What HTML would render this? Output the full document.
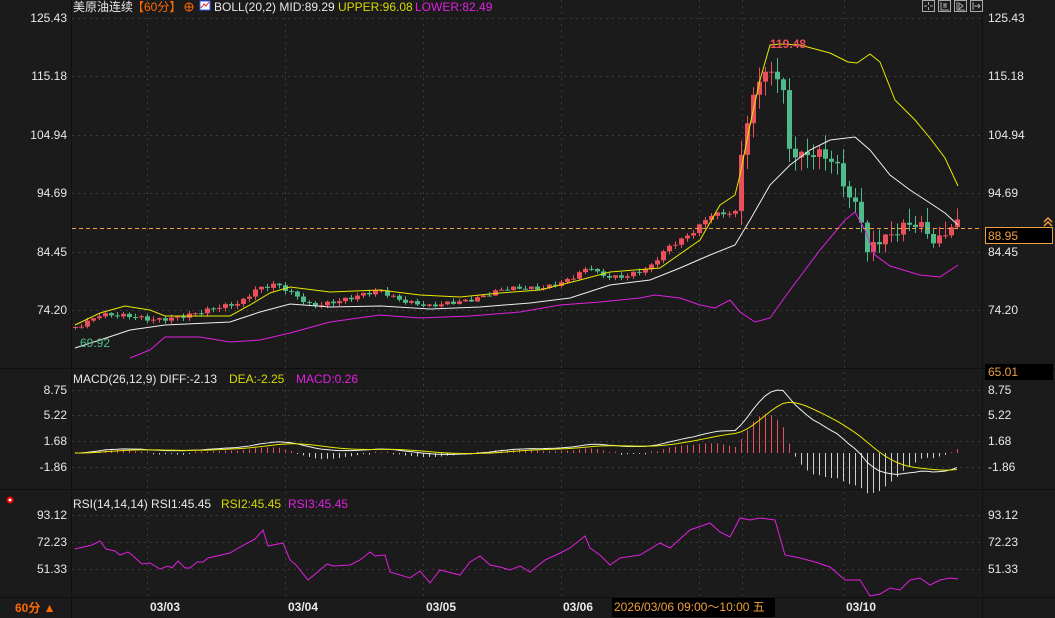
<!DOCTYPE html>
<html><head><meta charset="utf-8"><style>
html,body{margin:0;padding:0;background:#1b1b1b;width:1055px;height:618px;overflow:hidden;font-family:"Liberation Sans","Noto Sans CJK SC",sans-serif}
svg{position:absolute;left:0;top:0}
</style></head><body>
<svg id="s" width="1055" height="618" xmlns="http://www.w3.org/2000/svg" font-family="Liberation Sans, Noto Sans CJK SC, sans-serif">
<rect width="1055" height="618" fill="#1b1b1b"/>
<g stroke="#101010" stroke-width="1">
<line x1="71.5" y1="0" x2="71.5" y2="618"/>
<line x1="982.5" y1="0" x2="982.5" y2="618"/>
<line x1="0" y1="368.5" x2="1055" y2="368.5"/>
<line x1="0" y1="489.5" x2="1055" y2="489.5"/>
<line x1="0" y1="597.5" x2="1055" y2="597.5"/>
</g>
<g stroke="#3a3a3a" stroke-width="1" stroke-dasharray="2,4">
<line x1="72" y1="18.5" x2="982" y2="18.5"/><line x1="72" y1="76.5" x2="982" y2="76.5"/><line x1="72" y1="135.5" x2="982" y2="135.5"/><line x1="72" y1="193.5" x2="982" y2="193.5"/><line x1="72" y1="252.5" x2="982" y2="252.5"/><line x1="72" y1="310.5" x2="982" y2="310.5"/>
<line x1="72" y1="390.5" x2="982" y2="390.5"/><line x1="72" y1="415.5" x2="982" y2="415.5"/><line x1="72" y1="441.5" x2="982" y2="441.5"/><line x1="72" y1="467.5" x2="982" y2="467.5"/>
<line x1="72" y1="515.5" x2="982" y2="515.5"/><line x1="72" y1="542.5" x2="982" y2="542.5"/><line x1="72" y1="569.5" x2="982" y2="569.5"/>
<line x1="147.5" y1="0" x2="147.5" y2="597"/><line x1="285.5" y1="0" x2="285.5" y2="597"/><line x1="423.5" y1="0" x2="423.5" y2="597"/><line x1="561.5" y1="0" x2="561.5" y2="597"/><line x1="699.5" y1="0" x2="699.5" y2="597"/><line x1="742.5" y1="0" x2="742.5" y2="597"/><line x1="844.5" y1="0" x2="844.5" y2="597"/>
</g>
<g id="candles"></g>
<polyline fill="none" stroke="#e8e800" stroke-width="1" points="75,325 100,313 125,306 150,310 165,316 230,316 250,305 270,293 290,287 330,292 380,290 420,295 460,297 500,293 540,290 580,280 610,272 660,268 700,240 720,205 735,195 740,175 750,125 760,80 770,45 780,44 800,45 830,53 848,62 857,63 870,54 880,62 895,100 905,110 915,120 930,138 945,158 958,186"/>
<polyline fill="none" stroke="#f0f0f0" stroke-width="1" points="75,348 100,340 130,330 165,325 230,322 260,312 290,304 330,307 380,306 430,309 480,307 530,303 570,298 610,285 650,280 680,268 710,255 735,245 750,220 770,185 790,165 810,150 830,140 855,137 870,150 890,175 910,190 930,203 945,213 958,225"/>
<polyline fill="none" stroke="#e020e0" stroke-width="1" points="130,358 150,350 165,337 200,337 230,342 260,340 290,333 330,322 380,315 420,318 470,316 520,312 560,305 600,302 640,298 655,295 680,298 700,305 715,308 730,300 740,312 755,322 770,318 790,290 820,250 845,220 855,212 865,230 875,255 890,266 920,275 940,277 958,265"/>
<line x1="72" y1="228.5" x2="982" y2="228.5" stroke="#f0a040" stroke-width="1" stroke-dasharray="4,3"/>
<text x="770" y="48" fill="#e9505a" font-size="12" font-weight="bold">119.48</text>
<text x="80" y="347" fill="#4fba8a" font-size="12">69.92</text>
<g id="macd"></g>
<polyline fill="none" stroke="#e020e0" stroke-width="1" points="75,549 92,545 100,541 106,549 115,551 120,555 128,552 132,555 142,564 150,563 160,569 168,566 172,568 178,561 185,568 190,568 197,562 203,562 208,558 230,553 240,547 255,539 263,530 268,546 283,543 290,560 296,565 308,580 320,570 327,564 333,566 350,565 360,560 370,552 375,556 385,555 390,572 410,578 420,571 430,583 440,570 460,575 470,562 480,556 490,565 500,567 510,570 520,566 530,572 545,560 560,553 570,548 585,536 590,548 600,555 610,565 620,558 640,555 660,543 670,548 690,530 710,523 720,532 730,537 740,518 750,520 760,518 775,520 785,555 800,558 815,562 830,567 845,580 860,580 870,596 880,594 890,588 900,590 910,580 920,578 930,585 940,580 950,578 958,579"/>
<g font-size="12" fill="#e8e8e8" text-anchor="end">
<text x="67" y="22">125.43</text><text x="67" y="80">115.18</text><text x="67" y="139">104.94</text><text x="67" y="197">94.69</text><text x="67" y="256">84.45</text><text x="67" y="314">74.20</text>
<text x="67" y="394">8.75</text><text x="67" y="419">5.22</text><text x="67" y="445">1.68</text><text x="67" y="471">-1.86</text>
<text x="67" y="519">93.12</text><text x="67" y="546">72.23</text><text x="67" y="573">51.33</text>
</g>
<g font-size="12" fill="#e8e8e8">
<text x="988" y="22">125.43</text><text x="988" y="80">115.18</text><text x="988" y="139">104.94</text><text x="988" y="197">94.69</text><text x="988" y="256">84.45</text><text x="988" y="314">74.20</text>
<text x="988" y="394">8.75</text><text x="988" y="419">5.22</text><text x="988" y="445">1.68</text><text x="988" y="471">-1.86</text>
<text x="988" y="519">93.12</text><text x="988" y="546">72.23</text><text x="988" y="573">51.33</text>
</g>
<rect x="985.5" y="227.5" width="67" height="16" fill="#000" stroke="#f0a040"/>
<text x="988" y="240" font-size="12" fill="#f0a040">88.95</text>
<path d="M1044,222 l4,-4 l4,4 M1044,226 l4,-4 l4,4" stroke="#f0a040" fill="none" stroke-width="1.5"/>
<rect x="985" y="364" width="68" height="16" fill="#000"/>
<text x="988" y="376" font-size="12" fill="#f0a040">65.01</text>
<g fill="none" stroke="#aaa" stroke-width="1">
<rect x="922.5" y="0.5" width="12" height="11"/><rect x="938.5" y="0.5" width="12" height="11"/><rect x="954.5" y="0.5" width="12" height="11"/><rect x="970.5" y="0.5" width="12" height="11"/>
<path d="M928.5,2v3M928.5,7v3M924,6h3M930,6h3M941,2v8h8M944,3v5M946,3v5M944,5h2M957,2v8h8M959,3l4,3l-4,3zM973,2v8M974,6h6M978,4l2,2l-2,2"/>
</g>
<g font-size="12">
<text x="73" y="11" fill="#e8e8e8">美原油连续</text>
<text x="132" y="11" fill="#ff6a00">【60分】</text>
<circle cx="189" cy="7" r="4" fill="none" stroke="#ff6a00"/><path d="M185,7h8M189,3v8" stroke="#ff6a00"/>
<rect x="200" y="1" width="10" height="9" fill="#fff" stroke="#3a5aff"/><path d="M201,8l3,-4l2,2l3,-4" stroke="#e02020" fill="none"/>
<text x="214" y="11" fill="#e8e8e8">BOLL(20,2) MID:89.29</text>
<text x="338" y="11" fill="#d8d800">UPPER:96.08</text>
<text x="415" y="11" fill="#e020e0">LOWER:82.49</text>
<text x="73" y="383" fill="#e8e8e8">MACD(26,12,9) DIFF:-2.13</text>
<text x="229" y="383" fill="#d8d800">DEA:-2.25</text>
<text x="296" y="383" fill="#e020e0">MACD:0.26</text>
<text x="73" y="508" fill="#e8e8e8">RSI(14,14,14) RSI1:45.45</text>
<text x="221" y="508" fill="#d8d800">RSI2:45.45</text>
<text x="288" y="508" fill="#e020e0">RSI3:45.45</text>
</g>
<circle cx="10" cy="500" r="2.5" fill="#fff" stroke="#e00" stroke-width="2"/>
<g font-size="12" fill="#e8e8e8" font-weight="bold">
<text x="150" y="611">03/03</text><text x="288" y="611">03/04</text><text x="426" y="611">03/05</text><text x="563" y="611">03/06</text><text x="846" y="611">03/10</text>
</g>
<text x="15" y="612" font-size="12" fill="#ff6a00" font-weight="bold">60分 ▲</text>
<rect x="612" y="598" width="163" height="19" fill="#000"/>
<text x="614" y="611" font-size="12" fill="#f0a040">2026/03/06 09:00～10:00 五</text>
</svg>
<script>
(function(){
var NS="http://www.w3.org/2000/svg";
function py(p){return 18+(125.43-p)*5.684;}
var K=[[75,70.9],[100,73.5],[120,73],[150,72.3],[200,73.5],[240,75.5],[255,77.8],[275,78.5],[295,76.5],[310,75],[350,76],[380,77.5],[400,76],[430,74.5],[470,76],[500,77.5],[540,78],[570,79.5],[590,81.5],[600,80],[620,80],[650,81.5],[665,84.5],[690,87.5],[710,91],[720,91],[737,91],[742,104],[750,108],[756,114],[762,116],[770,116],[782,116],[786,103],[800,101],[820,101],[835,100],[845,96],[850,94],[860,92],[866,84],[875,86],[890,86.5],[900,88],[912,89.5],[925,89],[935,86],[945,88],[957,89]];
function f(x){for(var i=1;i<K.length;i++){if(x<=K[i][0]){var a=K[i-1],b=K[i];return a[1]+(b[1]-a[1])*(x-a[0])/(b[0]-a[0]);}}return K[K.length-1][1];}
var g=document.getElementById("candles"),closes=[],xs=[];
var prev=f(75);
for(var x=75;x<=957;x+=6){
 var n=Math.sin(x*0.37)*0.5+Math.sin(x*1.13)*0.35;
 var c=f(x)+n*(x>740?1.6:0.6);
 var o=prev;var hi=Math.max(o,c)+Math.abs(Math.sin(x*0.71))*(x>740?2.5:0.6);
 var lo=Math.min(o,c)-Math.abs(Math.cos(x*0.53))*(x>740?2.5:0.6);
 var col=c>=o?"#e9505a":"#4fba8a";
 var l=document.createElementNS(NS,"line");l.setAttribute("x1",x+0.5);l.setAttribute("x2",x+0.5);l.setAttribute("y1",py(hi));l.setAttribute("y2",py(lo));l.setAttribute("stroke",col);g.appendChild(l);
 var r=document.createElementNS(NS,"rect");var t=py(Math.max(o,c)),b=py(Math.min(o,c));r.setAttribute("x",x-2);r.setAttribute("width",5);r.setAttribute("y",t);r.setAttribute("height",Math.max(1,b-t));r.setAttribute("fill",col);g.appendChild(r);
 closes.push(c);xs.push(x);prev=c;
}
function ema(a,n){var k=2/(n+1),o=[a[0]];for(var i=1;i<a.length;i++)o.push(a[i]*k+o[i-1]*(1-k));return o;}
var e12=ema(closes,12),e26=ema(closes,26),dif=[],i;
for(i=0;i<closes.length;i++)dif.push(e12[i]-e26[i]);
var dea=ema(dif,9);
var m=document.getElementById("macd");
function my(v){return 453-v*7.26;}
var pd="",pe="";
for(i=0;i<xs.length;i++){
 var h=(dif[i]-dea[i])*2;var l=document.createElementNS(NS,"line");
 l.setAttribute("x1",xs[i]+0.5);l.setAttribute("x2",xs[i]+0.5);l.setAttribute("y1",my(0));l.setAttribute("y2",my(h)+(Math.abs(h)<0.1?(h>=0?-1:1):0));
 l.setAttribute("stroke",h>=0?"#e9505a":"#cfcfcf");m.appendChild(l);
 pd+=xs[i]+","+my(dif[i])+" ";pe+=xs[i]+","+my(dea[i])+" ";
}
var a=document.createElementNS(NS,"polyline");a.setAttribute("points",pd);a.setAttribute("fill","none");a.setAttribute("stroke","#f0f0f0");m.appendChild(a);
var b=document.createElementNS(NS,"polyline");b.setAttribute("points",pe);b.setAttribute("fill","none");b.setAttribute("stroke","#e8e800");m.appendChild(b);
})();
</script>
</body></html>
